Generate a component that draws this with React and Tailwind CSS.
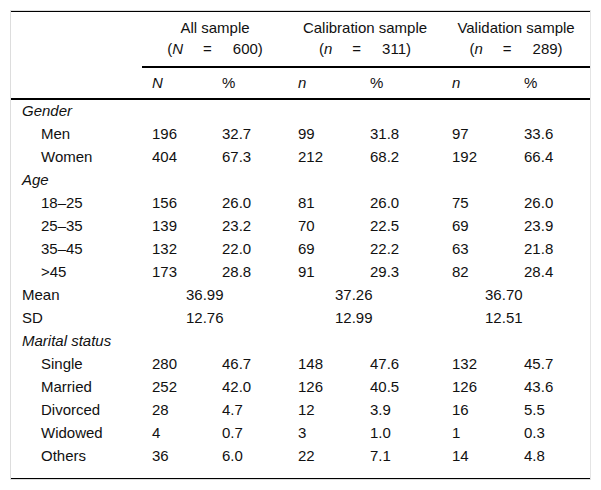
import React from 'react';

const ROWS = [
  { label: 'Gender', group: true },
  { label: 'Men', v: ['196', '32.7', '99', '31.8', '97', '33.6'] },
  { label: 'Women', v: ['404', '67.3', '212', '68.2', '192', '66.4'] },
  { label: 'Age', group: true },
  { label: '18–25', v: ['156', '26.0', '81', '26.0', '75', '26.0'] },
  { label: '25–35', v: ['139', '23.2', '70', '22.5', '69', '23.9'] },
  { label: '35–45', v: ['132', '22.0', '69', '22.2', '63', '21.8'] },
  { label: '>45', v: ['173', '28.8', '91', '29.3', '82', '28.4'] },
  { label: 'Mean', stat: ['36.99', '37.26', '36.70'] },
  { label: 'SD', stat: ['12.76', '12.99', '12.51'] },
  { label: 'Marital status', group: true },
  { label: 'Single', v: ['280', '46.7', '148', '47.6', '132', '45.7'] },
  { label: 'Married', v: ['252', '42.0', '126', '40.5', '126', '43.6'] },
  { label: 'Divorced', v: ['28', '4.7', '12', '3.9', '16', '5.5'] },
  { label: 'Widowed', v: ['4', '0.7', '3', '1.0', '1', '0.3'] },
  { label: 'Others', v: ['36', '6.0', '22', '7.1', '14', '4.8'] },
];

const WIDTHS = ['w-[131px]', 'w-[70px]', 'w-[76px]', 'w-[72px]', 'w-[82px]', 'w-[72px]', 'w-[76px]'];
const STAT_PAD = ['pl-[44px]', 'pl-[47px]', 'pl-[43px]'];

const GroupHead = ({ title, sym, num }) => (
  <th colSpan={2} className="border-b-2 border-black pt-[5px] pb-[7px] font-normal text-center leading-[21px]">
    <div>{title}</div>
    <div>
      (<i>{sym}</i>
      <span className="inline-block ml-[20px] mr-[21px]">=</span>
      {num})
    </div>
  </th>
);

export default function App() {
  return (
    <div className="bg-white w-[601px] h-[490px] pt-[10px] pl-[10px]">
      <div className="w-[581px] h-[470px] border border-[#dddddd] border-r-[#e4e4e4]">
        <table
          className="w-[579px] table-fixed border-collapse text-[15px] text-[#111] border-t border-black"
          style={{ fontFamily: '"Liberation Sans", Arial, sans-serif' }}
        >
          <colgroup>
            {WIDTHS.map((w, i) => (
              <col key={i} className={w} />
            ))}
          </colgroup>
          <thead>
            <tr>
              <th />
              <GroupHead title="All sample" sym="N" num="600" />
              <GroupHead title="Calibration sample" sym="n" num="311" />
              <GroupHead title="Validation sample" sym="n" num="289" />
            </tr>
            <tr className="border-b-2 border-black h-[32px]">
              <th />
              {['N', '%', 'n', '%', 'n', '%'].map((h, i) => (
                <th key={i} className="text-left font-normal pl-[10px]">
                  {h === '%' ? h : <i>{h}</i>}
                </th>
              ))}
            </tr>
          </thead>
          <tbody>
            {ROWS.map((r) => (
              <tr key={r.label} className="h-[23px]">
                {r.group ? (
                  <td colSpan={7} className="pl-[11px] italic">
                    {r.label}
                  </td>
                ) : r.stat ? (
                  <>
                    <td className="pl-[11px]">{r.label}</td>
                    {r.stat.map((s, i) => (
                      <td key={i} colSpan={2} className={STAT_PAD[i]}>
                        {s}
                      </td>
                    ))}
                  </>
                ) : (
                  <>
                    <td className="pl-[30px]">{r.label}</td>
                    {r.v.map((x, i) => (
                      <td key={i} className="pl-[10px]">
                        {x}
                      </td>
                    ))}
                  </>
                )}
              </tr>
            ))}
            <tr className="h-[11px] border-b border-black">
              <td colSpan={7} />
            </tr>
          </tbody>
        </table>
      </div>
    </div>
  );
}
